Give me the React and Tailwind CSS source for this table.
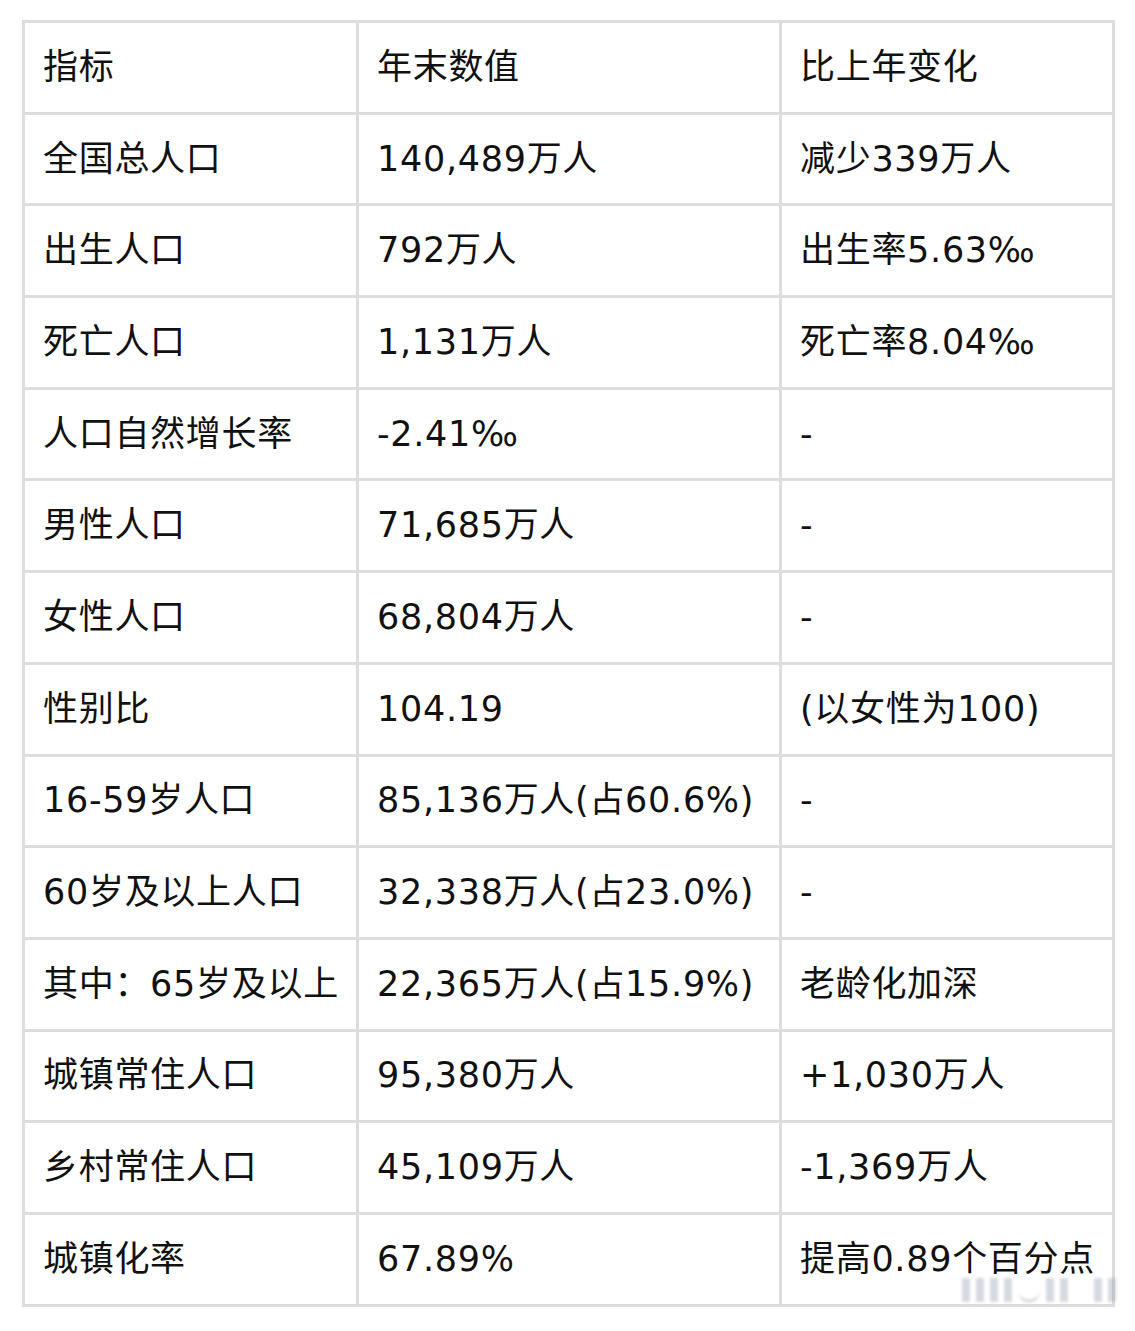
const rows = [
  ['指标', '年末数值', '比上年变化'],
  ['全国总人口', '140,489万人', '减少339万人'],
  ['出生人口', '792万人', '出生率5.63‰'],
  ['死亡人口', '1,131万人', '死亡率8.04‰'],
  ['人口自然增长率', '-2.41‰', '-'],
  ['男性人口', '71,685万人', '-'],
  ['女性人口', '68,804万人', '-'],
  ['性别比', '104.19', '(以女性为100)'],
  ['16-59岁人口', '85,136万人(占60.6%)', '-'],
  ['60岁及以上人口', '32,338万人(占23.0%)', '-'],
  ['其中：65岁及以上', '22,365万人(占15.9%)', '老龄化加深'],
  ['城镇常住人口', '95,380万人', '+1,030万人'],
  ['乡村常住人口', '45,109万人', '-1,369万人'],
  ['城镇化率', '67.89%', '提高0.89个百分点'],
];

export default function App() {
  return (
    <div
      className="w-[1135px] h-[1331px] bg-white pt-[20px] pl-[22px] text-[#111] relative"
      style={{ fontFamily: '"DejaVu Sans", "Noto Sans CJK SC", sans-serif' }}
    >
      <table className="border-collapse table-fixed w-[1090px]">
        <colgroup>
          <col className="w-[334px]" />
          <col className="w-[423px]" />
          <col className="w-[333px]" />
        </colgroup>
        <tbody>
          {rows.map((r, i) => (
            <tr key={i} className="h-[91.7px]">
              {r.map((c, j) => (
                <td
                  key={j}
                  className="border-[3px] border-[#dddddd] pl-[18px] pr-0 text-[35px] tracking-[0.7px] leading-none whitespace-nowrap align-middle"
                >
                  {c}
                </td>
              ))}
            </tr>
          ))}
        </tbody>
      </table>
      {/* faint watermark, bottom right */}
      <div className="absolute left-[962px] top-[1278px] flex gap-[6px] opacity-40 blur-[1.5px]">
        <div className="w-[8px] h-[24px] bg-gray-400" />
        <div className="w-[8px] h-[24px] bg-gray-400" />
        <div className="w-[8px] h-[24px] bg-gray-400" />
        <div className="w-[8px] h-[24px] bg-gray-400" />
        <div className="w-[22px] h-[24px] rounded-b-full border-b-2 border-gray-500" />
        <div className="w-[8px] h-[24px] bg-gray-400" />
        <div className="w-[8px] h-[24px] bg-gray-400" />
        <div className="w-[14px] h-[24px]" />
        <div className="w-[8px] h-[24px] bg-gray-400" />
        <div className="w-[8px] h-[24px] bg-gray-400" />
      </div>
    </div>
  );
}
